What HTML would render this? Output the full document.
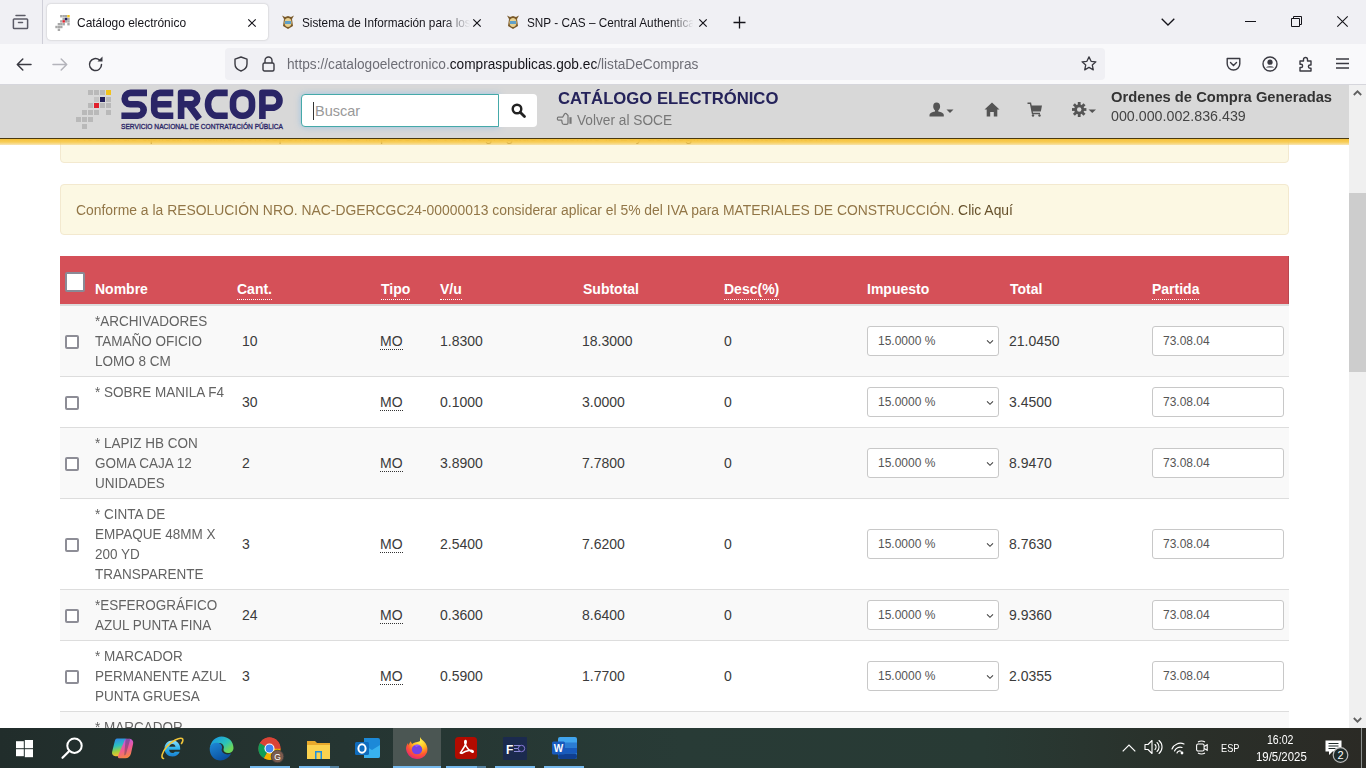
<!DOCTYPE html>
<html><head><meta charset="utf-8">
<style>
*{box-sizing:border-box;margin:0;padding:0}
html,body{width:1366px;height:768px;overflow:hidden;background:#fff;font-family:"Liberation Sans",sans-serif}
svg{position:absolute;overflow:visible}
#tabs{position:absolute;left:0;top:0;width:1366px;height:44px;background:#f0f0f4}
#nav{position:absolute;left:0;top:44px;width:1366px;height:40px;background:#f9f9fb}
#navline{position:absolute;left:0;top:84px;width:1366px;height:1px;background:#d6d6dc}
#page{position:absolute;left:0;top:85px;width:1349px;height:643px;background:#fff;overflow:hidden}
#sb{position:absolute;left:1349px;top:85px;width:17px;height:643px;background:#f0f0f0}
#thumb{position:absolute;left:0;top:108px;width:17px;height:179px;background:#cdcdcd}
#task{position:absolute;left:0;top:728px;width:1366px;height:40px;background:linear-gradient(to right,#212d2b 0%,#253532 25%,#283b36 50%,#283a34 72%,#2a2f29 88%,#2b2a25 100%)}
.tab{position:absolute;top:4px;height:36px}
.tt{position:absolute;top:11px;font-size:13px;line-height:15px;color:#15141a;white-space:nowrap;transform-origin:0 0}
#hdr{position:absolute;left:0;top:0;width:1349px;height:54px;background:#d8d8d8;border-bottom:1px solid #4a3a10;z-index:5}
#yel{position:absolute;left:0;top:54px;width:1349px;height:6px;background:linear-gradient(rgba(245,193,60,1) 0%,rgba(247,201,74,.93) 50%,rgba(240,205,110,.5) 100%);z-index:5}
.alert{position:absolute;left:60px;width:1229px;height:51px;background:#fcf8e3;border:1px solid #f3e9cf;border-radius:4px;color:#927647;font-size:14px;line-height:20px;padding:15px}
.th{position:absolute;top:171px;left:60px;width:1229px;height:50px;background:#d55058;border-bottom:2px solid #dcdcdc;box-shadow:inset -1px 0 0 #b9474f}
.th span{position:absolute;top:23px;color:#fff;font-weight:bold;font-size:14px;line-height:20px;white-space:nowrap}
.dot{border-bottom:1px dotted #fff;line-height:15px;display:inline-block}
.hcb{position:absolute;left:5px;top:16px;width:20px;height:20px;background:#fff;border:2px solid #8a8a96;border-radius:2px}
.row{position:absolute;left:60px;width:1229px;font-size:14px;color:#3b3b3b;line-height:20px}
.row .c{position:absolute;white-space:nowrap}
.bd{position:absolute;left:0;width:1229px;height:1px;background:#dddddd}
.cb{position:absolute;left:5px;width:14px;height:14px;border:2px solid #8d8d96;border-radius:2px;background:#fff}
.nm{position:absolute;left:35px;top:5px;line-height:20px;color:#636363;white-space:nowrap;transform:scaleX(0.965);transform-origin:0 0}
.sel{position:absolute;left:807px;width:132px;height:30px;border:1px solid #c8c8c8;border-radius:3px;background:#fff;font-size:12px;color:#555;line-height:28px}
.sel span{position:absolute;left:10px;top:0}
.sel svg{left:117px;top:12px}
.inp{position:absolute;left:1092px;width:132px;height:30px;border:1px solid #c8c8c8;border-radius:3px;background:#fff;font-size:12px;color:#555;line-height:28px;padding-left:10px}
.mo{border-bottom:1px dotted #333;display:inline-block;line-height:15px}
.ul{position:absolute;top:38px;height:2px;background:#76b9ed}
.ul2{position:absolute;top:38px;height:2px;background:#55819f}
.tray{position:absolute;color:#fff;font-size:12px;white-space:nowrap}
</style></head><body>

<div id="tabs">
  <svg style="left:12px;top:14px" width="17" height="16" viewBox="0 0 17 16"><path d="M4 1.5h9M2.2 5h12.6a0.8 0.8 0 0 1 .8.8v8a.8.8 0 0 1-.8.8H2.2a.8.8 0 0 1-.8-.8v-8A.8.8 0 0 1 2.2 5zM6.5 8.6h4" fill="none" stroke="#5b5b66" stroke-width="1.5" stroke-linecap="round"/></svg>
  <div style="position:absolute;left:42px;top:0;width:1px;height:44px;background:#cfcfd8"></div>
  <div class="tab" style="left:47px;width:221px;background:#fff;border-radius:4px;box-shadow:0 0 2px rgba(0,0,0,.25)">
    <svg style="left:8px;top:11px" width="15" height="16" viewBox="0 0 36 40">
      <g fill="#a8a8a8">
      <rect x="12" y="0" width="6" height="6"/><rect x="18" y="0" width="6" height="6"/><rect x="24" y="0" width="6" height="6"/>
      <rect x="18" y="7" width="6" height="6"/><rect x="30" y="7" width="6" height="6"/>
      <rect x="12" y="13" width="6" height="6"/><rect x="24" y="13" width="6" height="6"/><rect x="30" y="13" width="6" height="6"/>
      <rect x="6" y="20" width="6" height="6"/><rect x="12" y="20" width="6" height="6"/><rect x="18" y="20" width="6" height="6"/><rect x="30" y="20" width="6" height="6"/>
      <rect x="0" y="27" width="6" height="6"/><rect x="6" y="27" width="6" height="6"/><rect x="12" y="27" width="6" height="6"/>
      <rect x="6" y="34" width="6" height="6"/>
      </g>
      <rect x="30" y="0" width="6" height="6" fill="#f2c31c"/>
      <rect x="24" y="7" width="6" height="6" fill="#23205a"/>
      <rect x="18" y="13" width="6" height="6" fill="#e0202c"/>
    </svg>
    <div class="tt" style="left:30px;transform:scaleX(0.92)">Catálogo electrónico</div>
    <svg style="left:201px;top:14.5px" width="8" height="8" viewBox="0 0 8 8"><path d="M0.3 0.3L7.7 7.7M7.7 0.3L0.3 7.7" stroke="#15141a" stroke-width="1.2"/></svg>
  </div>
  <div class="tab" style="left:272px;width:221px">
    <svg style="left:9px;top:10px" width="14" height="16" viewBox="0 0 14 16"><path d="M1 1.5L4 3L7 2L10 3L13 1.5L11 5L12 12L7 15L2 12L3 5z" fill="#7a5a2a"/><ellipse cx="7" cy="8.5" rx="3.6" ry="4.6" fill="#e8d090"/><rect x="4" y="7" width="6" height="3" fill="#5fa0c8"/></svg>
    <div class="tt" style="left:30px;width:186px;overflow:hidden;transform:scaleX(0.905);-webkit-mask-image:linear-gradient(to right,#000 84%,transparent 100%)">Sistema de Información para los</div>
    <svg style="left:201px;top:14.5px" width="8" height="8" viewBox="0 0 8 8"><path d="M0.3 0.3L7.7 7.7M7.7 0.3L0.3 7.7" stroke="#15141a" stroke-width="1.2"/></svg>
  </div>
  <div class="tab" style="left:497px;width:221px">
    <svg style="left:9px;top:10px" width="14" height="16" viewBox="0 0 14 16"><path d="M1 1.5L4 3L7 2L10 3L13 1.5L11 5L12 12L7 15L2 12L3 5z" fill="#7a5a2a"/><ellipse cx="7" cy="8.5" rx="3.6" ry="4.6" fill="#e8d090"/><rect x="4" y="7" width="6" height="3" fill="#5fa0c8"/></svg>
    <div class="tt" style="left:30px;width:184px;overflow:hidden;transform:scaleX(0.905);-webkit-mask-image:linear-gradient(to right,#000 86%,transparent 100%)">SNP - CAS – Central Authentication</div>
    <svg style="left:201.5px;top:14.5px" width="8" height="8" viewBox="0 0 8 8"><path d="M0.3 0.3L7.7 7.7M7.7 0.3L0.3 7.7" stroke="#15141a" stroke-width="1.2"/></svg>
  </div>
  <svg style="left:733px;top:16px" width="13" height="13" viewBox="0 0 13 13"><path d="M6.5 0.5V12.5M0.5 6.5H12.5" stroke="#15141a" stroke-width="1.3"/></svg>
  <svg style="left:1161px;top:18px" width="14" height="8" viewBox="0 0 14 8"><path d="M0.7 0.7L7 7L13.3 0.7" fill="none" stroke="#15141a" stroke-width="1.3"/></svg>
  <svg style="left:1245px;top:21px" width="11" height="1" viewBox="0 0 11 1"><rect width="11" height="1" fill="#15141a"/></svg>
  <svg style="left:1291px;top:16px" width="11" height="11" viewBox="0 0 11 11"><path d="M0.5 2.5h8v8h-8zM2.5 2.5V0.5h8v8h-2" fill="none" stroke="#15141a" stroke-width="1"/></svg>
  <svg style="left:1337px;top:16px" width="11" height="11" viewBox="0 0 11 11"><path d="M0.3 0.3L10.7 10.7M10.7 0.3L0.3 10.7" stroke="#15141a" stroke-width="1.1"/></svg>
</div>

<div id="nav">
  <svg style="left:16px;top:14px" width="16" height="13" viewBox="0 0 16 13"><path d="M15 6.5H1.5M6.8 1L1.3 6.5L6.8 12" fill="none" stroke="#3a3a42" stroke-width="1.5" stroke-linecap="round" stroke-linejoin="round"/></svg>
  <svg style="left:52px;top:14px" width="16" height="13" viewBox="0 0 16 13"><path d="M1 6.5H14.5M9.2 1L14.7 6.5L9.2 12" fill="none" stroke="#b4b4bb" stroke-width="1.5" stroke-linecap="round" stroke-linejoin="round"/></svg>
  <svg style="left:88px;top:13px" width="16" height="15" viewBox="0 0 16 15"><path d="M13.5 7.5A6 6 0 1 1 11.3 2.9" fill="none" stroke="#3a3a42" stroke-width="1.5" stroke-linecap="round"/><path d="M9.5 4.5L14.5 4.5L14.5 -0.5z" fill="#3a3a42"/></svg>
  <div style="position:absolute;left:225px;top:4px;width:880px;height:32px;background:#f0f0f4;border-radius:4px"></div>
  <svg style="left:234px;top:12px" width="14" height="16" viewBox="0 0 14 16"><path d="M7 1L13 3.2V8C13 11.5 10.5 13.8 7 15C3.5 13.8 1 11.5 1 8V3.2z" fill="none" stroke="#3a3a42" stroke-width="1.4" stroke-linejoin="round"/></svg>
  <svg style="left:262px;top:12px" width="13" height="16" viewBox="0 0 13 16"><path d="M3 7V4.5A3.5 3.5 0 0 1 10 4.5V7" fill="none" stroke="#3a3a42" stroke-width="1.4"/><rect x="1" y="7" width="11" height="8" rx="1.5" fill="none" stroke="#3a3a42" stroke-width="1.4"/></svg>
  <div style="position:absolute;left:287px;top:12px;font-size:14px;line-height:16px;white-space:nowrap;color:#6d6d75;transform:scaleX(0.977);transform-origin:0 0">https://catalogoelectronico.<span style="color:#15141a">compraspublicas.gob.ec</span>/listaDeCompras</div>
  <svg style="left:1081px;top:12px" width="16" height="15" viewBox="0 0 16 15"><path d="M8 0.9L10.1 5.3L14.9 5.8L11.3 9.1L12.3 13.9L8 11.4L3.7 13.9L4.7 9.1L1.1 5.8L5.9 5.3z" fill="none" stroke="#3a3a42" stroke-width="1.3" stroke-linejoin="round"/></svg>
  <svg style="left:1226px;top:13px" width="15" height="14" viewBox="0 0 15 14"><path d="M1.2 1.5h12.6v5.2a6.3 6.3 0 0 1-12.6 0z" fill="none" stroke="#3a3a42" stroke-width="1.4" stroke-linejoin="round"/><path d="M4.5 5.5L7.5 8.5L10.5 5.5" fill="none" stroke="#3a3a42" stroke-width="1.4" stroke-linecap="round"/></svg>
  <svg style="left:1262px;top:12px" width="16" height="16" viewBox="0 0 16 16"><circle cx="8" cy="8" r="7" fill="none" stroke="#3a3a42" stroke-width="1.4"/><circle cx="8" cy="6.2" r="2.6" fill="#3a3a42"/><path d="M3.8 11.5a5.2 3 0 0 1 8.4 0" fill="#3a3a42"/></svg>
  <svg style="left:1299px;top:12px" width="14" height="16" viewBox="0 0 14 16"><path d="M1 5h3.5V3.5a2 2 0 0 1 4 0V5H12v4h-1a1.6 1.6 0 0 0 0 3.2h1V15H1v-3.5h1a1.6 1.6 0 0 0 0-3.2H1z" fill="none" stroke="#3a3a42" stroke-width="1.4" stroke-linejoin="round"/></svg>
  <svg style="left:1336px;top:14px" width="13" height="11" viewBox="0 0 13 11"><path d="M0 1h13M0 5.5h13M0 10h13" stroke="#3a3a42" stroke-width="1.4"/></svg>
</div>
<div id="navline"></div>

<div id="page">
  <div class="alert" style="top:27px"><span style="position:absolute;left:15px;top:13px;white-space:nowrap;transform:scaleX(1.02);transform-origin:0 0">Recuerde aplicar la tarifa correspondiente de impuesto al valor agregado conforme la Ley de Régimen Tributario Interno.</span></div>
  <div class="alert" style="top:99px"><span style="position:absolute;left:15px;top:15px;white-space:nowrap;transform:scaleX(0.9925);transform-origin:0 0">Conforme a la RESOLUCIÓN NRO. NAC-DGERCGC24-00000013 considerar aplicar el 5% del IVA para MATERIALES DE CONSTRUCCIÓN. <span style="color:#66512c">Clic Aquí</span></span></div>
  <div class="th">
    <div class="hcb"></div>
    <span style="left:35px">Nombre</span>
    <span style="left:177px"><span class="dot" style="position:static">Cant.</span></span>
    <span style="left:321px"><span class="dot" style="position:static">Tipo</span></span>
    <span style="left:380px"><span class="dot" style="position:static">V/u</span></span>
    <span style="left:523px">Subtotal</span>
    <span style="left:664px"><span class="dot" style="position:static">Desc(%)</span></span>
    <span style="left:807px">Impuesto</span>
    <span style="left:950px">Total</span>
    <span style="left:1092px"><span class="dot" style="position:static">Partida</span></span>
  </div>
<div class="row" style="top:221px;height:71px;background:#f9f9f9">
<div class="cb" style="top:29px"></div>
<div class="nm">*ARCHIVADORES<br>TAMAÑO OFICIO<br>LOMO 8 CM</div>
<div class="c" style="left:182px;top:25px">10</div>
<div class="c" style="left:320px;top:25px"><span class="mo">MO</span></div>
<div class="c" style="left:380px;top:25px">1.8300</div>
<div class="c" style="left:522px;top:25px">18.3000</div>
<div class="c" style="left:664px;top:25px">0</div>
<div class="sel" style="top:20px"><span>15.0000 %</span><svg width="10" height="6" viewBox="0 0 10 6"><path d="M2 1.3L5 4.3L8 1.3" fill="none" stroke="#444" stroke-width="1.1"/></svg></div>
<div class="c" style="left:949px;top:25px">21.0450</div>
<div class="inp" style="top:20px">73.08.04</div>
<div class="bd" style="top:70px"></div>
</div>
<div class="row" style="top:292px;height:51px;background:#fff">
<div class="cb" style="top:19px"></div>
<div class="nm">* SOBRE MANILA F4</div>
<div class="c" style="left:182px;top:15px">30</div>
<div class="c" style="left:320px;top:15px"><span class="mo">MO</span></div>
<div class="c" style="left:380px;top:15px">0.1000</div>
<div class="c" style="left:522px;top:15px">3.0000</div>
<div class="c" style="left:664px;top:15px">0</div>
<div class="sel" style="top:10px"><span>15.0000 %</span><svg width="10" height="6" viewBox="0 0 10 6"><path d="M2 1.3L5 4.3L8 1.3" fill="none" stroke="#444" stroke-width="1.1"/></svg></div>
<div class="c" style="left:949px;top:15px">3.4500</div>
<div class="inp" style="top:10px">73.08.04</div>
<div class="bd" style="top:50px"></div>
</div>
<div class="row" style="top:343px;height:71px;background:#f9f9f9">
<div class="cb" style="top:29px"></div>
<div class="nm">* LAPIZ HB CON<br>GOMA CAJA 12<br>UNIDADES</div>
<div class="c" style="left:182px;top:25px">2</div>
<div class="c" style="left:320px;top:25px"><span class="mo">MO</span></div>
<div class="c" style="left:380px;top:25px">3.8900</div>
<div class="c" style="left:522px;top:25px">7.7800</div>
<div class="c" style="left:664px;top:25px">0</div>
<div class="sel" style="top:20px"><span>15.0000 %</span><svg width="10" height="6" viewBox="0 0 10 6"><path d="M2 1.3L5 4.3L8 1.3" fill="none" stroke="#444" stroke-width="1.1"/></svg></div>
<div class="c" style="left:949px;top:25px">8.9470</div>
<div class="inp" style="top:20px">73.08.04</div>
<div class="bd" style="top:70px"></div>
</div>
<div class="row" style="top:414px;height:91px;background:#fff">
<div class="cb" style="top:39px"></div>
<div class="nm">* CINTA DE<br>EMPAQUE 48MM X<br>200 YD<br>TRANSPARENTE</div>
<div class="c" style="left:182px;top:35px">3</div>
<div class="c" style="left:320px;top:35px"><span class="mo">MO</span></div>
<div class="c" style="left:380px;top:35px">2.5400</div>
<div class="c" style="left:522px;top:35px">7.6200</div>
<div class="c" style="left:664px;top:35px">0</div>
<div class="sel" style="top:30px"><span>15.0000 %</span><svg width="10" height="6" viewBox="0 0 10 6"><path d="M2 1.3L5 4.3L8 1.3" fill="none" stroke="#444" stroke-width="1.1"/></svg></div>
<div class="c" style="left:949px;top:35px">8.7630</div>
<div class="inp" style="top:30px">73.08.04</div>
<div class="bd" style="top:90px"></div>
</div>
<div class="row" style="top:505px;height:51px;background:#f9f9f9">
<div class="cb" style="top:19px"></div>
<div class="nm">*ESFEROGRÁFICO<br>AZUL PUNTA FINA</div>
<div class="c" style="left:182px;top:15px">24</div>
<div class="c" style="left:320px;top:15px"><span class="mo">MO</span></div>
<div class="c" style="left:380px;top:15px">0.3600</div>
<div class="c" style="left:522px;top:15px">8.6400</div>
<div class="c" style="left:664px;top:15px">0</div>
<div class="sel" style="top:10px"><span>15.0000 %</span><svg width="10" height="6" viewBox="0 0 10 6"><path d="M2 1.3L5 4.3L8 1.3" fill="none" stroke="#444" stroke-width="1.1"/></svg></div>
<div class="c" style="left:949px;top:15px">9.9360</div>
<div class="inp" style="top:10px">73.08.04</div>
<div class="bd" style="top:50px"></div>
</div>
<div class="row" style="top:556px;height:71px;background:#fff">
<div class="cb" style="top:29px"></div>
<div class="nm">* MARCADOR<br>PERMANENTE AZUL<br>PUNTA GRUESA</div>
<div class="c" style="left:182px;top:25px">3</div>
<div class="c" style="left:320px;top:25px"><span class="mo">MO</span></div>
<div class="c" style="left:380px;top:25px">0.5900</div>
<div class="c" style="left:522px;top:25px">1.7700</div>
<div class="c" style="left:664px;top:25px">0</div>
<div class="sel" style="top:20px"><span>15.0000 %</span><svg width="10" height="6" viewBox="0 0 10 6"><path d="M2 1.3L5 4.3L8 1.3" fill="none" stroke="#444" stroke-width="1.1"/></svg></div>
<div class="c" style="left:949px;top:25px">2.0355</div>
<div class="inp" style="top:20px">73.08.04</div>
<div class="bd" style="top:70px"></div>
</div>
<div class="row" style="top:627px;height:71px;background:#f9f9f9">
<div class="cb" style="top:29px"></div>
<div class="nm">* MARCADOR<br>PERMANENTE AZUL<br>PUNTA GRUESA</div>
<div class="c" style="left:182px;top:25px">3</div>
<div class="c" style="left:320px;top:25px"><span class="mo">MO</span></div>
<div class="c" style="left:380px;top:25px">0.5900</div>
<div class="c" style="left:522px;top:25px">1.7700</div>
<div class="c" style="left:664px;top:25px">0</div>
<div class="sel" style="top:20px"><span>15.0000 %</span><svg width="10" height="6" viewBox="0 0 10 6"><path d="M2 1.3L5 4.3L8 1.3" fill="none" stroke="#444" stroke-width="1.1"/></svg></div>
<div class="c" style="left:949px;top:25px">2.0355</div>
<div class="inp" style="top:20px">73.08.04</div>
<div class="bd" style="top:70px"></div>
</div>
  <div id="hdr">
    <svg style="left:76px;top:5px" width="36" height="42" viewBox="0 0 36 42">
      <g fill="#b9b9b9">
      <rect x="12" y="0" width="5" height="5"/><rect x="18" y="0" width="5" height="5"/><rect x="24" y="0" width="5" height="5"/>
      <rect x="18" y="7" width="5" height="5" fill="#c4c4c4"/><rect x="30" y="7" width="5" height="5"/>
      <rect x="12" y="13" width="5" height="5"/><rect x="24" y="13" width="5" height="5"/><rect x="30" y="13" width="5" height="5"/>
      <rect x="6" y="20" width="5" height="5"/><rect x="12" y="20" width="5" height="5"/><rect x="18" y="20" width="5" height="5"/><rect x="30" y="20" width="5" height="5"/>
      <rect x="0" y="27" width="5" height="5"/><rect x="6" y="27" width="5" height="5"/><rect x="12" y="27" width="5" height="5"/>
      <rect x="6" y="34" width="5" height="5"/>
      </g>
      <rect x="30" y="0" width="5" height="5" fill="#f2c31c"/>
      <rect x="24" y="7" width="5" height="5" fill="#23205a"/>
      <rect x="18" y="13" width="5" height="5" fill="#e0202c"/>
    </svg>
    <svg style="left:121px;top:4px" width="163" height="42" viewBox="0 0 163 42">
      <g fill="none" stroke="#2a2566" stroke-width="6.6" stroke-linejoin="round">
<path d="M26,3.9 H9.5 A5.8,5.8 0 0 0 3.7,9.7 V10 A5.3,5.3 0 0 0 9,15.3 H17 A5.7,5.7 0 0 1 22.7,21 A5.7,5.7 0 0 1 17,26.7 H0.4"/>
<path d="M52.3,3.9 H39 A5.8,5.8 0 0 0 33.2,9.7 V20.9 A5.8,5.8 0 0 0 39,26.7 H52.3 M33.2,15.3 H50.5"/>
<path d="M60.1,30 V3.9 H70.5 A5.7,5.7 0 0 1 76.2,9.6 A5.7,5.7 0 0 1 70.5,15.3 H60.1 M67.5,15.3 L78.3,30"/>
<path d="M106.7,3.9 H95.5 A8.5,11.4 0 0 0 95.5,26.7 H106.7"/>
<rect x="112" y="3.9" width="19" height="22.8" rx="8.5" ry="9"/>
<path d="M141.4,30 V3.9 H151 A7.5,7.5 0 0 1 158.5,11.4 A7.4,7.4 0 0 1 151.1,18.8 H141.4"/>
</g>
      <text x="0" y="40" font-family="Liberation Sans" font-weight="normal" font-size="8" fill="#2a2566" stroke="#2a2566" stroke-width="0.35" textLength="162" lengthAdjust="spacingAndGlyphs">SERVICIO NACIONAL DE CONTRATACIÓN PÚBLICA</text>
    </svg>
    <div style="position:absolute;left:301px;top:9px;width:198px;height:33px;background:#fff;border:1px solid #45a9a9;border-radius:4px 0 0 4px;box-shadow:0 0 6px rgba(102,175,233,.55)"></div>
    <div style="position:absolute;left:313px;top:17px;width:1px;height:18px;background:#333"></div>
    <div style="position:absolute;left:315px;top:17px;font-size:14.5px;line-height:18px;color:#999">Buscar</div>
    <div style="position:absolute;left:499px;top:9px;width:38px;height:33px;background:#fff;border-radius:0 4px 4px 0"></div>
    <svg style="left:511px;top:18px" width="15" height="15" viewBox="0 0 15 15"><circle cx="6" cy="6" r="4.3" fill="none" stroke="#222" stroke-width="2.4"/><path d="M9.2 9.2L13.5 13.5" stroke="#222" stroke-width="2.8" stroke-linecap="round"/></svg>
    <div style="position:absolute;left:558px;top:4px;font-size:17px;line-height:20px;font-weight:bold;color:#25235b;white-space:nowrap;transform:scaleX(0.982);transform-origin:0 0">CATÁLOGO ELECTRÓNICO</div>
    <svg style="left:557px;top:27px" width="16" height="14" viewBox="0 0 16 14"><path d="M1.2 5.2H5.6L7.6 1.9Q8.5 0.9 9.5 1.8L11 3.5V11Q11 12.4 9.6 12.4H7.1Q5.7 12.4 5.2 11.1L4.7 8.1H1.3Q0.4 8.1 0.4 6.7Q0.4 5.2 1.2 5.2z" fill="none" stroke="#777" stroke-width="1.25" stroke-linejoin="round"/><rect x="12.4" y="5.2" width="2.2" height="6.6" fill="#777"/></svg>
    <div style="position:absolute;left:577px;top:27px;font-size:14px;line-height:16px;color:#777;white-space:nowrap;transform:scaleX(0.977);transform-origin:0 0">Volver al SOCE</div>
    <svg style="left:929px;top:17px" width="26" height="15" viewBox="0 0 26 15"><path d="M7.5 0.5a3.6 3.9 0 0 1 3.6 3.9c0 1.7-.9 3.2-1.8 3.8v1.2c3 .6 5.5 1.8 5.5 3.4V14.5H0.5V12.8c0-1.6 2.5-2.8 5.5-3.4V8.2c-.9-.6-1.8-2.1-1.8-3.8A3.6 3.9 0 0 1 7.5 0.5z" fill="#555"/><path d="M17.5 7.5h7l-3.5 3.6z" fill="#555"/></svg>
    <svg style="left:984px;top:17px" width="16" height="15" viewBox="0 0 16 15"><path d="M8 0.5L15.5 7.5H13.3V14.5H9.8V10H6.2V14.5H2.7V7.5H0.5z" fill="#555"/></svg>
    <svg style="left:1027px;top:17px" width="16" height="15" viewBox="0 0 16 15"><path d="M0.5 1.2H3.5L5.5 11.5H13" fill="none" stroke="#555" stroke-width="1.4"/><path d="M3.8 3.5H15L13.8 9.5H5z" fill="#555"/><circle cx="6" cy="13.5" r="1.2" fill="#555"/><circle cx="12.5" cy="13.5" r="1.2" fill="#555"/></svg>
    <svg style="left:1072px;top:17px" width="26" height="15" viewBox="0 0 26 15"><g fill="#555"><circle cx="7.2" cy="7.5" r="5"/><rect x="5.8" y="0" width="2.8" height="15"/><rect x="0" y="6.1" width="14.4" height="2.8"/><rect x="5.8" y="0" width="2.8" height="15" transform="rotate(45 7.2 7.5)"/><rect x="5.8" y="0" width="2.8" height="15" transform="rotate(-45 7.2 7.5)"/></g><circle cx="7.2" cy="7.5" r="2.2" fill="#d9d9d9"/><path d="M16.5 7.5h7.5l-3.75 3.6z" fill="#555"/></svg>
    <div style="position:absolute;left:1111px;top:3px;font-size:15px;line-height:18px;font-weight:bold;color:#333;white-space:nowrap;transform:scaleX(0.982);transform-origin:0 0">Ordenes de Compra Generadas</div>
    <div style="position:absolute;left:1111px;top:23px;font-size:14px;line-height:16px;color:#444;white-space:nowrap;transform:scaleX(1.018);transform-origin:0 0">000.000.002.836.439</div>
  </div>
  <div id="yel"></div>
</div>

<div id="sb">
  <svg style="left:4px;top:5px" width="9" height="6" viewBox="0 0 9 6"><path d="M0.8 5L4.5 1.3L8.2 5" fill="none" stroke="#606060" stroke-width="1.8"/></svg>
  <div id="thumb"></div>
  <svg style="left:4px;top:632px" width="9" height="6" viewBox="0 0 9 6"><path d="M0.8 1L4.5 4.7L8.2 1" fill="none" stroke="#606060" stroke-width="1.8"/></svg>
</div>

<div id="task">
  <svg style="left:16px;top:12px" width="17" height="17" viewBox="0 0 17 17"><g fill="#fff"><rect x="0" y="1.2" width="7.8" height="7"/><rect x="8.8" y="0" width="8.2" height="8.2"/><rect x="0" y="9.2" width="7.8" height="7"/><rect x="8.8" y="9.2" width="8.2" height="8"/></g></svg>
  <svg style="left:61px;top:9px" width="23" height="22" viewBox="0 0 23 22"><circle cx="13.5" cy="8.7" r="7.2" fill="none" stroke="#fff" stroke-width="2"/><path d="M8.3 14L1.5 20.8" stroke="#fff" stroke-width="2.2" stroke-linecap="round"/></svg>
  <svg style="left:111px;top:9px" width="24" height="22" viewBox="0 0 24 22"><defs><linearGradient id="cp1" x1="0" y1="0" x2="0.2" y2="1"><stop offset="0" stop-color="#2f7ff0"/><stop offset=".45" stop-color="#2cc0c0"/><stop offset=".75" stop-color="#9ad040"/><stop offset="1" stop-color="#f5c030"/></linearGradient><linearGradient id="cp2" x1="0.3" y1="0" x2="0.6" y2="1"><stop offset="0" stop-color="#b05cf0"/><stop offset=".5" stop-color="#f0589a"/><stop offset="1" stop-color="#f58a3a"/></linearGradient></defs><path d="M6 1.5h8.5c1.3 0 2 1 1.6 2.2L12 17c-.5 1.5-1.5 2.2-3 2.2H4.5C2 19.2.5 17 1.2 14.6L3.8 4C4.2 2.4 4.8 1.5 6 1.5z" fill="url(#cp1)"/><path d="M13.5 3.5c.4-1.2 1.4-1.8 2.6-1.8H18c2.8 0 4.8 2.3 4.1 5L20 16.5c-.8 3-2.8 4.8-5.6 4.8H8.8c-1.4 0-2.2-1.1-1.8-2.4z" fill="url(#cp2)"/><path d="M14.6 1.7H18c1 0 1.3.8 1 1.6L15 17c-.3.9-1 1.3-1.8 1.3z" fill="#1f2f4a" opacity=".35"/></svg>
  <svg style="left:160px;top:8px" width="25" height="24" viewBox="0 0 25 24"><defs><linearGradient id="ieg" x1="0" y1="0" x2="0" y2="1"><stop offset="0" stop-color="#8fe0ff"/><stop offset=".5" stop-color="#2eb4ec"/><stop offset="1" stop-color="#1a7fd0"/></linearGradient></defs><path d="M12.5 4.5c-4.6 0-8 3.4-8 8s3.3 8 8 8c3.4 0 6.1-1.8 7.3-4.7h-4.9c-.6.9-1.4 1.3-2.5 1.3-1.9 0-3.1-1.3-3.3-3.3h11c.1-.4.1-.9.1-1.3 0-4.6-3.1-8-7.7-8zm-3.3 6.3c.3-1.7 1.5-2.8 3.2-2.8s2.9 1.1 3.1 2.8z" fill="url(#ieg)"/><path d="M3.5 22.5C0.5 22 2 16 7 10.5 12 5 19 1.3 22 2.5c1.5.6 1 2.8-.5 5" fill="none" stroke="#f2c63a" stroke-width="1.6" stroke-linecap="round"/></svg>
  <svg style="left:209px;top:8px" width="25" height="25" viewBox="0 0 25 25"><defs><linearGradient id="edg1" x1="0.2" y1="0.1" x2="0.9" y2="0.7"><stop offset="0" stop-color="#1a9de0"/><stop offset=".6" stop-color="#2cc4b8"/><stop offset="1" stop-color="#6bd65a"/></linearGradient><linearGradient id="edg2" x1="0" y1="0" x2="0.6" y2="1"><stop offset="0" stop-color="#1f8ad8"/><stop offset="1" stop-color="#0a4f9e"/></linearGradient></defs><path d="M12.5 0.5C19.5 0.5 24.5 5.5 24.5 12c0 3-2.4 5-5.5 5-2.7 0-4.5-1.5-4.5-3.3 0-.8.4-1.5.4-2.2 0-2.4-2.2-4.5-5-4.5C4.5 7 1.5 9.6.7 12.4 1.6 5.5 6.5.5 12.5.5z" fill="url(#edg1)"/><path d="M.7 12.4C1.6 7.7 5 6.8 7.8 6.8c3 0 5.3 2 5.3 4.6 0 .8-.5 1.7-.5 2.4 0 2.6 2.6 4.6 6 4.6 1.5 0 2.6-.3 3.5-.8-2.1 4.3-6.2 6.9-10.6 6.9C5.7 24.5.5 19.5.7 12.4z" fill="url(#edg2)"/><ellipse cx="10" cy="15" rx="3.2" ry="3.6" fill="#1e2c2a" opacity=".0"/></svg>
  <svg style="left:258px;top:9px" width="27" height="26" viewBox="0 0 27 26"><circle cx="11.5" cy="11.5" r="11" fill="#db4437"/><path d="M11.5 11.5L1.9 6A11 11 0 0 0 6 21.3z" fill="#0f9d58"/><path d="M11.5 11.5L6 21.3A11 11 0 0 0 22.5 11.5z" fill="#f4b400"/><path d="M11.5 11.5L22.5 11.5A11 11 0 0 0 1.9 6z" fill="#db4437"/><circle cx="11.5" cy="11.5" r="5" fill="#fff"/><circle cx="11.5" cy="11.5" r="3.9" fill="#4285f4"/><circle cx="19.5" cy="19.5" r="6.3" fill="#7a5b4e" stroke="#3a3a3a" stroke-width=".8"/><text x="19.5" y="22.6" font-family="Liberation Sans" font-size="8.5" fill="#fff" text-anchor="middle">G</text></svg>
  <svg style="left:307px;top:11px" width="23" height="20" viewBox="0 0 23 20"><path d="M0 2h8l2 2h13v16H0z" fill="#e8a92c"/><path d="M0 6h23v14H0z" fill="#fbd24f"/><path d="M8 12h7v8H8z" fill="#1d8fe0"/><path d="M9.5 13.5h4v6.5h-4z" fill="#fbd24f"/></svg>
  <svg style="left:355px;top:9px" width="26" height="23" viewBox="0 0 26 23"><path d="M9 1h14a2 2 0 0 1 2 2v16a2 2 0 0 1-2 2H9z" fill="#1c89d8"/><path d="M9 8l8 5 8-5v11a2 2 0 0 1-2 2H9z" fill="#38b2ef"/><rect x="0" y="5" width="14" height="13" rx="1.5" fill="#0f6cbd"/><ellipse cx="7" cy="11.5" rx="3.6" ry="4.2" fill="none" stroke="#fff" stroke-width="2"/></svg>
  <div style="position:absolute;left:393px;top:0;width:48px;height:40px;background:#4b5653"></div>
  <svg style="left:405px;top:9px" width="24" height="23" viewBox="0 0 24 23"><defs><radialGradient id="ff" cx=".65" cy=".2" r=".9"><stop offset="0" stop-color="#fff44f"/><stop offset=".35" stop-color="#ffbd1f"/><stop offset=".65" stop-color="#ff5a2d"/><stop offset="1" stop-color="#e31587"/></radialGradient></defs><path d="M15 0c1 2.5 3 3 4.5 5 3 3.5 3.5 7.5 2.5 10.5A11 11 0 0 1 1 12c0-2.5.8-4.5 2-6l.5 2.5C4 6.5 5 5 6 4.2 6 5.5 6.5 6.5 7.5 7 9 5 13 5.5 15 4z" fill="url(#ff)"/><ellipse cx="12" cy="12.5" rx="5.2" ry="4.8" fill="#7542e5"/><path d="M9 8.5c2-1.5 5-1.3 6.5 0-1.5.3-3 .5-4 1.5z" fill="#9059ff"/></svg>
  <svg style="left:455px;top:9px" width="22" height="22" viewBox="0 0 22 22"><rect width="22" height="22" rx="3.5" fill="#b30b00"/><path d="M5 16.5c1.5-2.5 5-7 6-10.5.4-1.5 0-2.5-.5-2.5S9.5 4.5 10 6.5c1 3.5 4.5 7.5 7 8.5 1 .4 1.5-.4 1-1-1-1-6-1-11.5 2.5" fill="none" stroke="#fff" stroke-width="1.6" stroke-linejoin="round"/></svg>
  <svg style="left:503px;top:9px" width="24" height="23" viewBox="0 0 24 23"><rect width="24" height="23" rx="1" fill="#1b2a4e"/><text x="3" y="16.5" font-family="Liberation Sans" font-weight="bold" font-size="12" fill="#fff">F</text><path d="M11 8.5h6M11 11.5h4M11 14.5h6" stroke="#8a8ad8" stroke-width="1.2"/><circle cx="18.5" cy="11.5" r="3.2" fill="none" stroke="#8a7ad8" stroke-width="1"/></svg>
  <svg style="left:552px;top:9px" width="25" height="22" viewBox="0 0 25 22"><rect x="6" y="0" width="19" height="22" rx="2" fill="#41a5ee"/><rect x="6" y="5.5" width="19" height="5.5" fill="#2b7cd3"/><rect x="6" y="11" width="19" height="5.5" fill="#185abd"/><rect x="6" y="16.5" width="19" height="5.5" rx="2" fill="#103f91"/><rect x="0" y="4.5" width="13" height="13" rx="1.5" fill="#185abd"/><text x="6.5" y="15" font-family="Liberation Sans" font-weight="bold" font-size="10" fill="#fff" text-anchor="middle">W</text></svg>
  <div class="ul" style="left:250px;width:40px"></div>
  <div class="ul" style="left:299px;width:31px"></div><div class="ul2" style="left:330px;width:9px"></div>
  <div class="ul" style="left:393px;width:48px"></div>
  <div class="ul" style="left:446px;width:31px"></div><div class="ul2" style="left:477px;width:9px"></div>
  <div class="ul" style="left:495px;width:40px"></div>
  <div class="ul" style="left:544px;width:40px"></div>
  <svg style="left:1122px;top:16px" width="14" height="8" viewBox="0 0 14 8"><path d="M0.7 7.3L7 1L13.3 7.3" fill="none" stroke="#fff" stroke-width="1.2"/></svg>
  <svg style="left:1144px;top:11px" width="18" height="16" viewBox="0 0 18 16"><path d="M1 5.5h3l4-4v13l-4-4H1z" fill="none" stroke="#fff" stroke-width="1.1" stroke-linejoin="round"/><path d="M11 5.5a3.5 3.5 0 0 1 0 5M13 3.5a6 6 0 0 1 0 9M15 1.5a8.5 8.5 0 0 1 0 13" fill="none" stroke="#fff" stroke-width="1.1" stroke-linecap="round"/></svg>
  <svg style="left:1171px;top:14px" width="14" height="13" viewBox="0 0 14 13"><path d="M1 7a9 9 0 0 1 12-5M3.5 9a6 6 0 0 1 7.5-3.5M6 11a3 3 0 0 1 4-1.8" fill="none" stroke="#fff" stroke-width="1.2" stroke-linecap="round"/><circle cx="11" cy="11" r="1.4" fill="#fff"/></svg>
  <svg style="left:1196px;top:11px" width="12" height="17" viewBox="0 0 12 17"><path d="M2 3a6 5 0 0 1 7 0M2 14a6 5 0 0 0 7 0" fill="none" stroke="#fff" stroke-width="1.1"/><rect x="0.6" y="5" width="7.5" height="7" rx="1.5" fill="none" stroke="#fff" stroke-width="1.1"/><path d="M8.2 7.5l3-1.8v5.6l-3-1.8" fill="none" stroke="#fff" stroke-width="1.1"/></svg>
  <div class="tray" style="left:1221px;top:13px;font-size:11.5px;line-height:14px;transform:scaleX(0.8);transform-origin:0 0">ESP</div>
  <div class="tray" style="left:1267px;top:5px;font-size:12px;line-height:14px;transform:scaleX(0.88);transform-origin:0 0">16:02</div>
  <div class="tray" style="left:1256px;top:22px;font-size:12px;line-height:14px;transform:scaleX(0.95);transform-origin:0 0">19/5/2025</div>
  <svg style="left:1325px;top:12px" width="26" height="24" viewBox="0 0 26 24"><path d="M0.5 0.5h16v11h-9l-3.5 3.5v-3.5H0.5z" fill="#fff"/><path d="M3.5 3.5h10M3.5 6h10M3.5 8.5h7" stroke="#1f2b2a" stroke-width="1"/><circle cx="15.5" cy="15" r="7.3" fill="#1f2b2a" stroke="#bbb" stroke-width="1.2"/><text x="15.5" y="19" font-family="Liberation Sans" font-size="11" fill="#fff" text-anchor="middle">2</text></svg>
  <div style="position:absolute;left:1361px;top:0;width:1px;height:40px;background:#8a8f8e"></div>

</div>
</body></html>
